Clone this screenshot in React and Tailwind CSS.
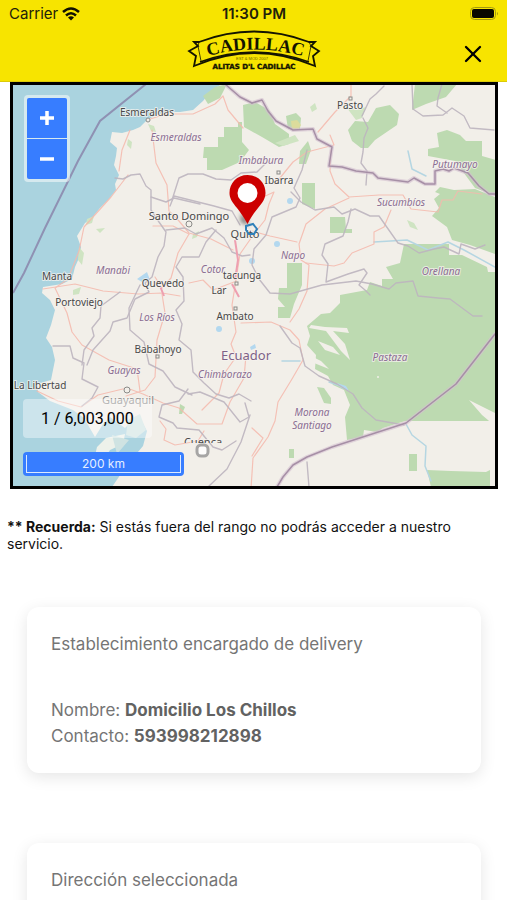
import { X } from "lucide-react";

const land =
  "M222 84 L212 90 L203 101 L193 110 L180 112 L167 112 L156 115 L147 120 L140 127 L133 130 L122 133 L112 132 L110 142 L117 148 L116 156 L114 165 L119 175 L115 184 L116 190 L109 199 L100 208 L92 218 L85 223 L77 236 L81 247 L79 258 L75 267 L72 279 L62 284 L43 287 L42 293 L50 300 L55 310 L51 325 L46 338 L52 347 L55 360 L51 380 L37 384 L38 392 L50 401 L73 410 L84 418 L95 437 L103 424 L110 417 L125 428 L133 420 L140 418 L147 431 L143 446 L127 465 L112 487 L496 487 L496 84 Z";

const forests = [
  "M204 147 h14 v-10 h6 v-10 h14 v-5 h4 v20 l7 8 l-9 12 l-18 8 h-15 v-12 h-4 Z",
  "M243 105 l12 -3 l14 8 l6 14 l14 10 v10 l-10 3 l-17 -10 l-18 -10 Z",
  "M286 116 l10 -3 l5 5 l-1 11 h-12 Z",
  "M300 151 l8 -10 l3 9 l-5 14 h-7 Z",
  "M348 130 l7 -9 l13 1 l8 -14 l14 -3 l9 9 l-2 11 l-22 15 l-7 8 h-7 l-9 -7 Z",
  "M412 110 l3 -26 h42 l-11 13 l-20 7 Z",
  "M428 149 l11 -2 l-2 -14 l10 -3 l13 5 l6 6 h16 v15 l14 4 v36 l-21 -8 l-20 -27 l-27 -5 Z",
  "M435 192 l5 -5 l14 3 l21 -1 l20 8 v57 l-25 -9 l-18 -5 l-5 -13 l-15 -11 l7 -8 l-5 -9 l6 -5 Z",
  "M302 183 h13 v26 l-13 -5 Z",
  "M330 217 h15 l1 12 h6 v4 h-22 Z",
  "M287 263 h15 v22 l-8 19 l-4 14 h-12 v-11 h7 l-7 -8 l1 -11 h8 Z",
  "M404 244 h45 v11 h13 l25 12 l1 5 h7 v149 h-90 l-22 7 l-6 4 l-13 -2 l-1 7 l-16 3 l-2 -23 l5 -12 l-6 -15 l-11 -5 l-5 -9 l-13 -7 l1 -14 l-9 -10 l3 -9 l-3 -10 l14 -12 l9 -1 l10 -10 v-8 l27 -5 l3 -8 l12 4 v-7 h11 l-7 -12 l14 -4 Z",
  "M317 387 l7 1 l7 10 v6 l-7 -1 Z",
  "M409 454 h8 v17 h-8 Z",
  "M427 470 l24 1 l35 1 l4 -2 v17 h-59 Z",
  "M289 449 h5 v9 h-5 Z",
  "M203 96 l12 -9 l12 -3 l-7 14 l-12 6 Z",
  "M180 404 l5 3 l-3 7 h-3 Z",
];

const borders = [
  "M252 103 l10 -3 l6 11 l8 10 l17 9 l20 -1 l4 10 l15 8 l-3 19 l13 1 l14 4 l17 2 l5 5 l30 4 l6 -4 l11 6 h10 v-13 l8 -2 l6 2 l5 -3 l14 5 l11 13 l10 8 h9",
  "M277 487 l6 -10 l10 -12 l14 -8 l25 -10 l74 -24 l50 -39 l39 -50",
  "M225 84 l15 13 l12 6",
];

const provinces = [
  "M115 178 l8 1 l8 -4 l9 -1 l6 12 l5 4 v7 l15 5 l8 -4 l26 6",
  "M172 200 l7 -22 l9 -4 h15 l13 5 l15 1 l10 -7 l16 -1 l10 -10",
  "M151 197 v13 l8 12 l7 10 l-2 14 l-6 11 l-6 20 l-7 6 l4 9 l-14 7 l-8 19 l-14 4 l-3 9 l-17 19 l-6 15",
  "M166 230 l19 -2 l11 6 l16 -6 l12 10 l8 14 l10 4 l8 -1",
  "M216 230 l-10 12 l-7 15 l-17 0 l-6 10 l7 10 l1 24 l-8 9 l6 14 l-3 16 l12 10 l2 22 l11 11 l12 11 l13 4 l10 -4 l12 7",
  "M140 285 l-11 23 l1 22 l14 12 l5 22 l14 7 l12 16 l17 8",
  "M82 365 l2 -15 l10 -14 l-2 -8 l8 -10 l1 -12 l19 -14",
  "M53 346 h17 l3 12 l11 5 l-2 16 l16 8 l-6 11 l-10 8",
  "M188 389 l-9 12 l-17 4 l-3 12 l14 6 l4 5 l22 2 l14 17 l9 3 l14 -9",
  "M250 415 l-9 27 l-14 27 l-18 17",
  "M245 403 l4 14 l-9 5 l-16 -20 l-24 -10 l-12 2",
  "M307 150 l-5 20 l-8 18 l6 10 l-4 9 l-24 10 l-6 18 l-12 14 l-2 16 l7 14 l11 14 l20 1 l32 -9 l34 -4 l16 3 l17 5 l7 -6 l17 -2 l5 15 l20 2 l12 1 l23 17 h9",
  "M291 192 l10 10 l14 8 l19 -3 l8 7 l13 -5 l15 7 h9 l19 27 l10 3 l11 7 l15 -4 l10 -2 l15 7 l2 -10 l14 5 l10 -4",
  "M351 209 l-3 13 l-5 14 l-18 8 l-3 11 l6 9 l-2 18 l22 -8 l16 -5 l3 4 l-8 12 l6 5 l5 5",
  "M363 118 l5 10 l-4 10 l-1 14 l-2 11 l6 8 l-1 14",
  "M362 116 l8 -17 l6 -5 l8 -8",
  "M412 84 l1 25 l10 7 l20 -1 l9 -7 l12 8 l6 12 l24 2",
  "M442 84 l-4 14 l-1 8 l10 7",
  "M280 326 l12 17 l8 5 l5 18 l14 10 l18 8 l16 10 l9 14 l14 12 l28 5",
  "M307 462 l2 25",
  "M170 206 l4 -10 l40 10 l18 5 l8 14",
];

const roads = [
  "M147 120 l19 -6 l27 0 l22 -10 l8 -8 l5 14 l15 18",
  "M152 130 l4 33 l11 22 l2 26 l10 10 l10 12 l22 6 l22 11",
  "M119 171 l3 -21 l8 -20",
  "M153 226 h20 l16 8",
  "M128 175 l-17 22 l-27 30 l-5 24 l-11 28 l-13 9 l12 25 l5 19 l10 13 l27 15 l28 9 l3 22",
  "M43 289 l32 -5 l28 7 l35 3 l24 -1 l18 3",
  "M162 294 l3 19 l-8 27 l-2 37 l-10 13 l-19 6",
  "M189 234 l-11 19 l-7 25 l-9 10 l-7 -11",
  "M252 213 l9 -15 l13 -6 l-5 12 l-4 16 l-11 14 l-14 20 l-4 26 l-4 25 l4 27 l-5 12 l5 13 l-12 17 l-5 19 l-17 17",
  "M189 283 l14 -3 l10 10 l21 -8",
  "M241 323 l30 -1 l19 8 l9 10 l4 20 l-11 19 l-14 23 l-3 19 l-7 16 l-15 21 l-2 31",
  "M275 184 l18 -22 l14 -10 l27 -7 l-4 -10",
  "M351 84 v12 l-16 16 l-17 20",
  "M331 150 l-1 21 l5 13 l14 13 l30 -2 l24 0 l8 14 l27 3 l4 -12 h11 l5 -9 l24 3",
  "M349 198 l-24 11 l-19 15 l-7 20 l2 16 l8 5 l-2 26 l-8 18 l-9 13",
  "M306 263 l28 3 l10 -3 l8 -10 l22 -9 v-12 l10 -5 l7 -17",
  "M252 231 l18 5 l27 6",
  "M37 391 l21 10 l23 6 l17 -12 l29 -7 l16 6 l20 9 l16 5 l18 16 h25 l8 -22 l14 -24 l2 -23",
  "M160 421 l6 8 l-2 11 l11 5 l23 -4 l6 -10",
  "M252 428 l11 10 l-11 18",
];

const rivers = [
  "M374 242 l33 -2 l21 10 l20 -8 l16 8 l31 17",
  "M343 387 l-14 -5 M300 361 h-18",
  "M406 424 l6 11 l14 11 l-1 20 l6 15",
  "M408 151 l4 18 l14 7",
];

const towns = [
  { name: "Esmeraldas", x: 147, y: 116, size: 10 },
  { name: "Pasto", x: 350, y: 109, size: 10 },
  { name: "Ibarra", x: 279, y: 184, size: 10 },
  { name: "Santo Domingo", x: 189, y: 220, size: 11 },
  { name: "Quito", x: 245, y: 238, size: 11 },
  { name: "Manta", x: 57, y: 280, size: 10 },
  { name: "Quevedo", x: 163, y: 287, size: 10 },
  { name: "tacunga", x: 242, y: 279, size: 10 },
  { name: "Lar", x: 219, y: 294, size: 10 },
  { name: "Portoviejo", x: 79, y: 306, size: 10 },
  { name: "Ambato", x: 235, y: 320, size: 10 },
  { name: "Babahoyo", x: 158, y: 353, size: 10 },
  { name: "La Libertad", x: 40, y: 389, size: 10 },
  { name: "Guayaquil", x: 128, y: 404, size: 11 },
];

const regions = [
  { name: "Esmeraldas", x: 176, y: 141 },
  { name: "Imbabura", x: 261, y: 164 },
  { name: "Putumayo", x: 455, y: 168 },
  { name: "Sucumbíos", x: 401, y: 206 },
  { name: "Manabi", x: 113, y: 274 },
  { name: "Cotor", x: 213, y: 273 },
  { name: "Napo", x: 293, y: 259 },
  { name: "Orellana", x: 441, y: 275 },
  { name: "Los Ríos", x: 157, y: 321 },
  { name: "Guayas", x: 124, y: 374 },
  { name: "Chimborazo", x: 225, y: 378 },
  { name: "Pastaza", x: 390, y: 361 },
];

function Lines({ paths, ...rest }) {
  return (
    <g fill="none" strokeLinejoin="round" strokeLinecap="round" {...rest}>
      {paths.map((d) => (
        <path key={d} d={d} />
      ))}
    </g>
  );
}

function MapCanvas() {
  return (
    <svg
      viewBox="13 85 482 401"
      preserveAspectRatio="xMidYMid slice"
      className="block h-full w-full"
      role="img"
      aria-label="Mapa de Ecuador"
    >
      <defs>
        <clipPath id="cuenca">
          <rect x="180" y="430" width="50" height="13" />
        </clipPath>
        <filter id="soft" x="-50%" y="-50%" width="200%" height="200%">
          <feGaussianBlur stdDeviation="2" />
        </filter>
      </defs>
      <rect x="13" y="84" width="482" height="403" fill="#aad3df" />
      <path d={land} fill="#f2efe9" />
      <path d="M97 447 l9 -9 l19 -4 l-2 10 l-13 6 l-9 14 l-7 -4 Z" fill="#edf1ea" />
      <path d="M128 420 l12 -6 l6 16 l-10 8 l-10 -3 Z M112 435 l17 5 l-12 14 Z" fill="#cfe3e2" />
      <g fill="#bddab1">
        {forests.map((d) => (
          <path key={d} d={d} />
        ))}
      </g>
      <path
        fill="#cfe4c2"
        d="M148 124 l6 2 l2 6 l-5 -1 Z M128 139 l4 3 l-1 7 l-4 -4 Z M87 219 l7 -3 l-2 7 l-6 2 Z M79 247 l5 6 l-2 12 l-4 -5 Z M193 234 l6 -3 l-2 6 l-5 2 Z M96 229 l9 -1 l-5 5 Z M73 290 l8 -3 l-2 7 l-6 1 Z M310 107 l5 -4 l2 6 l-5 3 Z M347 108 l9 2 l10 -3 l-4 11 l-6 2 Z M275 143 l20 -8 l4 6 l-16 5 Z M407 220 l7 3 l4 7 l-8 -3 Z"
      />
      <g fill="#f2efe9">
        <path d="M311 325 l14 2 l22 1 l2 5 l-16 -2 l12 13 l5 16 l-9 -9 l-15 -20 l-17 -3 Z M318 341 l15 6 l7 8 l-15 -5 Z M309 355 l12 6 l8 8 l-15 -6 Z M469 400 l26 13 v13 l-13 -11 Z" />
        <circle cx="378" cy="377" r="1" />
      </g>
      <path d="M291 121 l6 -1 l4 5 l-3 5 h-6 Z" fill="#dcdc9c" />
      <g fill="#b3d8ef">
        <circle cx="290" cy="201" r="3" />
        <circle cx="277" cy="244" r="3" />
        <circle cx="252" cy="261" r="3" />
        <circle cx="219" cy="329" r="3" />
        <path d="M250 347 l5 -3 l1 4 l-5 2 Z M137 279 l10 -7 l3 8 l-8 2 Z M337 383 l9 3 l3 5 l-8 -3 Z" />
      </g>
      <Lines paths={rivers} stroke="#b5d6e2" strokeWidth="1.5" />
      <Lines paths={roads} stroke="#f5b9ad" strokeWidth="1.2" opacity="0.85" />
      <Lines paths={provinces} stroke="#bdb5bf" strokeWidth="1.4" opacity="0.9" />
      <Lines paths={borders} stroke="#d3bfd0" strokeWidth="4" opacity="0.6" />
      <Lines paths={borders} stroke="#a68fa6" strokeWidth="1.5" />
      <path d="M13 293 L24 273 L45 228 L78 161 L100 121 L146 84" fill="none" stroke="#8f91b3" strokeWidth="2" />
      <path d="M160 286 l4 10 M235 240 l3 20 l-3 20 M232 284 l7 13" fill="none" stroke="#ee9fb0" strokeWidth="2" />
      <g fill="#f2efe9" stroke="#8b8b88" strokeWidth="1">
        <circle cx="148" cy="120" r="2" />
        <circle cx="189" cy="224" r="3" />
        <circle cx="127" cy="390" r="3" />
        <rect x="156" y="355" width="3" height="3" />
        <rect x="234" y="307" width="3" height="3" />
        <rect x="277" y="171" width="3" height="3" />
        <rect x="349" y="97" width="3" height="3" />
        <rect x="235" y="282" width="3" height="3" />
      </g>
      <g
        fontFamily="'Noto Sans', sans-serif"
        textAnchor="middle"
        stroke="#f6f3ef"
        strokeOpacity="0.75"
        strokeWidth="2"
        paintOrder="stroke"
        strokeLinejoin="round"
      >
        <g fill="#8a6d92" fontStyle="italic" fontSize="10">
          {regions.map((r) => (
            <text key={r.name} x={r.x} y={r.y}>
              {r.name}
            </text>
          ))}
          <text>
            <tspan x="312" y="416">Morona</tspan>
            <tspan x="312" y="429">Santiago</tspan>
          </text>
        </g>
        <g fill="#484848">
          {towns.map((t) => (
            <text key={t.name} x={t.x} y={t.y} fontSize={t.size} fill={t.name === "Guayaquil" ? "#858585" : "#484848"}>
              {t.name}
            </text>
          ))}
          <text x="203" y="446" fontSize="11" clipPath="url(#cuenca)">
            Cuenca
          </text>
        </g>
        <text x="246" y="360" fontSize="13" fill="#7d6187">
          Ecuador
        </text>
      </g>
      <rect x="197" y="445" width="11" height="11" rx="4" fill="#fff" stroke="#999" strokeWidth="3" opacity="0.85" />
      <path d="M240 222 l9 4 l-2 -9 l-6 -4 Z" fill="#444" opacity="0.6" filter="url(#soft)" />
      <path d="M246 226 l7 -2 l4 5 l-3 5 h-5 l-3 -4 Z" fill="none" stroke="#2f80b9" strokeWidth="2" />
      <path
        d="M247.500 175 C237 175 229.500 183 229.500 193 C229.500 203 239 207 247.500 224 C256 207 265.500 203 265.500 193 C265.500 183 258 175 247.500 175 Z"
        fill="#cc0000"
      />
      <circle cx="247.500" cy="193" r="10" fill="#fff" />
    </svg>
  );
}

function Logo() {
  return (
    <svg viewBox="187 29 136 44" className="h-11 w-34" role="img" aria-label="Cadillac, Alitas D'l Cadillac">
      <defs>
        <path id="arc" d="M203 59 Q255 42 310 59" />
      </defs>
      <g fill="none" stroke="#141400" strokeLinejoin="miter">
        <path
          strokeWidth="1.8"
          d="M200 43 Q255 22 310 43 L316 43 L312 47 L320 52 L314 57 L316 67 Q255 41 195 67 L197 57 L190 52 L199 47 L195 43 Z"
        />
        <path strokeWidth="1.6" d="M201 63 Q255 43 310 63" />
        <path strokeWidth="0.8" d="M200 43 L199 47 L202 62 M310 43 L312 47 L309 62" />
      </g>
      <g fill="#141400" textAnchor="middle">
        <text fontFamily="'Liberation Serif', serif" fontWeight="700" fontSize="18">
          <textPath href="#arc" startOffset="50%">
            CADILLAC
          </textPath>
        </text>
        <text x="253" y="61" fontFamily="'Liberation Sans', sans-serif" fontSize="4" fill="#6e6600">
          EST &amp; MOD 2007
        </text>
        <text x="255" y="70" fontFamily="'DejaVu Sans', sans-serif" fontWeight="700" fontSize="7" stroke="#141400" strokeWidth="0.4">
          ALITAS D'L CADILLAC
        </text>
      </g>
    </svg>
  );
}

function StatusBar() {
  return (
    <div className="grid h-7 grid-cols-3 items-center pr-2 pl-[9px] text-[15px] leading-5 text-[#22210a]">
      <div className="flex items-center gap-1">
        <span>Carrier</span>
        <svg viewBox="0 0 18 14" className="h-3.5 w-[18px]" aria-hidden="true">
          <g fill="none" stroke="#111100" strokeWidth="2.500">
            <path d="M1 5 Q9 -2 17 5" />
            <path d="M4 8.500 Q9 4 14 8.500" />
          </g>
          <path d="M6 10.500 Q9 8 12 10.500 L9 13.500 Z" fill="#111100" />
        </svg>
      </div>
      <span className="text-center font-semibold">11:30 PM</span>
      <svg viewBox="0 0 29 14" className="h-3.5 w-[29px] justify-self-end" aria-hidden="true">
        <rect x="0.500" y="0.500" width="25" height="12" rx="4" fill="none" stroke="#a39a12" />
        <rect x="2" y="2" width="22" height="9" rx="2" fill="#080800" />
        <path d="M27 5 Q29 6.500 27 8.500 Z" fill="#a39a12" />
      </svg>
    </div>
  );
}

function Card({ title, children }) {
  return (
    <section className="rounded-xl bg-white px-6 pt-6 pb-6 text-[17px] leading-[26px] text-[#757575] shadow-[0_4px_16px_rgba(0,0,0,0.1)]">
      <h2>{title}</h2>
      <div className="mt-10">{children}</div>
    </section>
  );
}

const zoomButton =
  "flex h-10 w-10 items-center justify-center bg-[#377dff] text-white first:rounded-t-xs last:rounded-b-xs";

export default function App() {
  return (
    <div className="flex h-screen flex-col overflow-hidden bg-white font-['Inter',sans-serif]">
      <header className="shrink-0 border-b border-[#dccb08] bg-[#f7e400]">
        <StatusBar />
        <div className="grid h-[53px] grid-cols-[1fr_auto_1fr] items-start px-5">
          <div className="col-start-2">
            <Logo />
          </div>
          <button type="button" aria-label="Cerrar" className="mt-3 justify-self-end text-black">
            <X size={28} strokeWidth={2} />
          </button>
        </div>
      </header>

      <main className="min-h-0 flex-1 overflow-hidden">
        <div className="relative mr-[9px] ml-2.5 h-[407px] border-3 border-black">
          <MapCanvas />
          <div className="absolute top-2.5 left-[11px] flex flex-col gap-px rounded bg-white/50 p-[3px]">
            <button type="button" aria-label="Acercar" className={zoomButton}>
              <svg viewBox="0 0 16 16" className="size-4" aria-hidden="true">
                <path d="M8 1 V15 M1 8 H15" stroke="currentColor" strokeWidth="3.500" />
              </svg>
            </button>
            <button type="button" aria-label="Alejar" className={zoomButton}>
              <svg viewBox="0 0 16 16" className="size-4" aria-hidden="true">
                <path d="M1 8 H15" stroke="currentColor" strokeWidth="3.500" />
              </svg>
            </button>
          </div>
          <div className="absolute bottom-2.5 left-2.5 flex flex-col items-start gap-3.5">
            <div className="rounded bg-white/40 px-[18px] py-1 font-['Roboto',sans-serif] text-[16px] leading-[31px] text-black">
              1 / 6,003,000
            </div>
            <div className="rounded bg-[#377dff] p-[3px]">
              <div className="h-[18px] w-[155px] border border-t-0 border-[#dce9ff] text-center text-[12px] leading-[17px] text-[#e6efff]">
                200 km
              </div>
            </div>
          </div>
        </div>

        <p className="mt-[29px] px-[7px] text-[14px] leading-[17px] text-[#111]">
          <strong className="font-bold">** Recuerda:</strong> Si estás fuera del rango no podrás acceder a nuestro servicio.
        </p>

        <div className="mt-[55px] mr-[26px] ml-[27px] flex flex-col gap-[70px]">
          <Card title="Establecimiento encargado de delivery">
            <p>
              Nombre: <strong className="font-bold text-[#626262]">Domicilio Los Chillos</strong>
            </p>
            <p>
              Contacto: <strong className="font-bold text-[#626262]">593998212898</strong>
            </p>
          </Card>
          <Card title="Dirección seleccionada" />
        </div>
      </main>
    </div>
  );
}
